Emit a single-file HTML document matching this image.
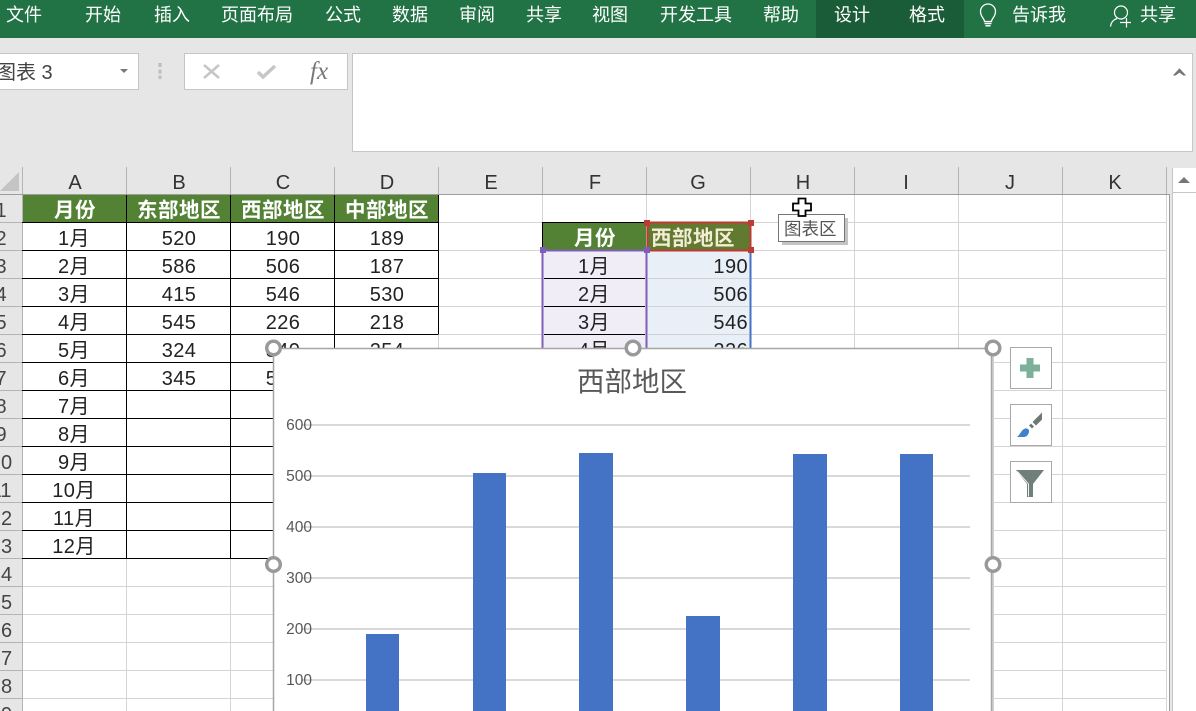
<!DOCTYPE html>
<html lang="zh"><head><meta charset="utf-8"><title>Excel</title>
<style>
html,body{margin:0;padding:0;background:#e6e6e6;width:1196px;height:711px;overflow:hidden}
svg{display:block}
text{font-family:"Liberation Sans","Noto Sans CJK SC",sans-serif}
.t{font-size:18px;fill:#fff;text-anchor:middle}
.c{font-size:20px;fill:#333;text-anchor:middle}
.r{font-size:20px;fill:#444;text-anchor:middle}
.h{font-size:20.5px;font-weight:700;fill:#fff;text-anchor:middle;letter-spacing:.5px}
.d{font-size:20px;fill:#222;text-anchor:middle;letter-spacing:.4px}
.e{font-size:20px;fill:#222;text-anchor:end;letter-spacing:.4px}
.y{font-size:15.5px;fill:#595959;text-anchor:end}
</style></head><body>
<svg xmlns="http://www.w3.org/2000/svg" width="1196" height="711" viewBox="0 0 1196 711">
<rect width="1196" height="711" fill="#e6e6e6"/>
<!-- ribbon -->
<rect width="1196" height="38" fill="#217346"/>
<rect x="816" width="148" height="38" fill="#1a5c38"/>
<g>
<text class="t" x="24" y="21">文件</text><text class="t" x="103" y="21">开始</text><text class="t" x="172" y="21">插入</text><text class="t" x="257" y="21">页面布局</text><text class="t" x="343" y="21">公式</text><text class="t" x="410" y="21">数据</text><text class="t" x="477" y="21">审阅</text><text class="t" x="544" y="21">共享</text><text class="t" x="610" y="21">视图</text><text class="t" x="696" y="21">开发工具</text><text class="t" x="781" y="21">帮助</text><text class="t" x="852" y="21">设计</text><text class="t" x="927" y="21">格式</text><text class="t" x="1039" y="21">告诉我</text><text class="t" x="1158" y="21">共享</text>
</g>
<!-- bulb -->
<path d="M984.500 21.500c0-3-4-4.500-4-10a7.500 7.500 0 0 1 15 0c0 5.500-4 7-4 10z" fill="none" stroke="#fff" stroke-width="1.300"/>
<path d="M984.500 23.500h7M985.500 25.800h5" stroke="#fff" stroke-width="1.500"/>
<!-- person -->
<circle cx="1121" cy="12.500" r="6.500" fill="none" stroke="#fff" stroke-width="1.200"/>
<path d="M1110.500 26.500c.5-4.500 3.500-7 6.500-8M1120 22.500h11M1126.500 18v9.500" fill="none" stroke="#fff" stroke-width="1.200"/>
<!-- formula bar -->
<rect x="-5" y="53.500" width="143.500" height="36" fill="#fff" stroke="#c6c6c6"/>
<text x="-4" y="79" font-size="20" fill="#444">图表 3</text>
<path d="M120 69h8l-4 4z" fill="#777"/>
<path d="M158.500 63h3v4h-3zM158.500 69.500h3v4h-3zM158.500 75.500h3v3.500h-3z" fill="#bdbdbd"/>
<rect x="184.500" y="53.500" width="163" height="36" fill="#fff" stroke="#c6c6c6"/>
<path d="M204 65l15 13M219 65l-15 13" stroke="#c6c6c6" stroke-width="2.500"/>
<path d="M258 72l5 5 12-11" fill="none" stroke="#c6c6c6" stroke-width="3.500"/>
<text x="310" y="79" font-size="25" font-style="italic" fill="#777" style="font-family:'Liberation Serif',serif">fx</text>
<rect x="352.500" y="53.500" width="840" height="98" fill="#fff" stroke="#c6c6c6"/>
<path d="M1174 75l5.500-6 5.500 6-1.500 0-4-3-4 3z" fill="#777" stroke="#777"/>
<!-- sheet -->
<path d="M0 191V191L19 172V191z" fill="#c4c4c4"/>
<rect x="23" y="195" width="1146" height="516" fill="#fff"/>
<path d="M22.500 167v27M126.500 167v27M230.500 167v27M334.500 167v27M438.500 167v27M542.500 167v27M646.500 167v27M750.500 167v27M854.500 167v27M958.500 167v27M1062.500 167v27M1166.500 167v27" stroke="#b4b4b4"/>
<path d="M0 194.500H1169" stroke="#9c9c9c"/>
<path d="M0 222.500h22M0 250.500h22M0 278.500h22M0 306.500h22M0 334.500h22M0 362.500h22M0 390.500h22M0 418.500h22M0 446.500h22M0 474.500h22M0 502.500h22M0 530.500h22M0 558.500h22M0 586.500h22M0 614.500h22M0 642.500h22M0 670.500h22M0 698.500h22M22.500 195V711" stroke="#b4b4b4"/>
<path d="M23 222.500H1166M23 250.500H1166M23 278.500H1166M23 306.500H1166M23 334.500H1166M23 362.500H1166M23 390.500H1166M23 418.500H1166M23 446.500H1166M23 474.500H1166M23 502.500H1166M23 530.500H1166M23 558.500H1166M23 586.500H1166M23 614.500H1166M23 642.500H1166M23 670.500H1166M23 698.500H1166M126.500 195V711M230.500 195V711M334.500 195V711M438.500 195V711M542.500 195V711M646.500 195V711M750.500 195V711M854.500 195V711M958.500 195V711M1062.500 195V711M1166.500 195V711" stroke="#d4d4d4"/>
<path d="M1169.500 194V711" stroke="#9c9c9c"/>
<rect x="1170" y="167" width="2" height="544" fill="#e6e6e6"/>
<rect x="1172" y="168" width="24" height="543" fill="#fff"/>
<path d="M1172.500 168V711M1172 192.500H1196" stroke="#c6c6c6"/>
<path d="M1178 183l6-6 6 6z" fill="#777"/>
<!-- column letters -->
<g>
<text class="c" x="75" y="189">A</text><text class="c" x="179" y="189">B</text><text class="c" x="283" y="189">C</text><text class="c" x="387" y="189">D</text><text class="c" x="491" y="189">E</text><text class="c" x="595" y="189">F</text><text class="c" x="698" y="189">G</text><text class="c" x="803" y="189">H</text><text class="c" x="906" y="189">I</text><text class="c" x="1010" y="189">J</text><text class="c" x="1115" y="189">K</text>
</g>
<!-- row numbers -->
<g>
<text class="r" x="1" y="217">1</text><text class="r" x="1" y="245">2</text><text class="r" x="1" y="273">3</text><text class="r" x="1" y="301">4</text><text class="r" x="1" y="329">5</text><text class="r" x="1" y="357">6</text><text class="r" x="1" y="385">7</text><text class="r" x="1" y="413">8</text><text class="r" x="1" y="441">9</text><text class="r" x="1" y="469">10</text><text class="r" x="1" y="497">11</text><text class="r" x="1" y="525">12</text><text class="r" x="1" y="553">13</text><text class="r" x="1" y="581">14</text><text class="r" x="1" y="609">15</text><text class="r" x="1" y="637">16</text><text class="r" x="1" y="665">17</text><text class="r" x="1" y="693">18</text><text class="r" x="1" y="721">19</text>
</g>
<!-- table A:D -->
<rect x="23" y="195" width="415" height="27" fill="#548235"/>
<path d="M22 222.500H438.500M22 250.500H438.500M22 278.500H438.500M22 306.500H438.500M22 334.500H438.500M22 362.500H334M22 390.500H334M22 418.500H334M22 446.500H334M22 474.500H334M22 502.500H334M22 530.500H334M22 558.500H334M126.500 195V558M230.500 195V558M334.500 195V362M438.500 195V334" stroke="#000"/>
<g>
<text class="h" x="75" y="217">月份</text><text class="h" x="179" y="217">东部地区</text><text class="h" x="283" y="217">西部地区</text><text class="h" x="387" y="217">中部地区</text>
<text class="d" x="74" y="245">1月</text><text class="d" x="74" y="273">2月</text><text class="d" x="74" y="301">3月</text><text class="d" x="74" y="329">4月</text><text class="d" x="74" y="357">5月</text><text class="d" x="74" y="385">6月</text><text class="d" x="74" y="413">7月</text><text class="d" x="74" y="441">8月</text><text class="d" x="74" y="469">9月</text><text class="d" x="74" y="497">10月</text><text class="d" x="74" y="525">11月</text><text class="d" x="74" y="553">12月</text>
<text class="d" x="179" y="245">520</text><text class="d" x="179" y="273">586</text><text class="d" x="179" y="301">415</text><text class="d" x="179" y="329">545</text><text class="d" x="179" y="357">324</text><text class="d" x="179" y="385">345</text>
<text class="d" x="283" y="245">190</text><text class="d" x="283" y="273">506</text><text class="d" x="283" y="301">546</text><text class="d" x="283" y="329">226</text><text class="d" x="283" y="357">340</text><text class="d" x="283" y="385">543</text>
<text class="d" x="387" y="245">189</text><text class="d" x="387" y="273">187</text><text class="d" x="387" y="301">530</text><text class="d" x="387" y="329">218</text><text class="d" x="387" y="357">254</text>
</g>
<!-- table F:G -->
<rect x="543" y="251" width="103" height="100" fill="#f0edf7"/>
<rect x="647" y="251" width="103" height="100" fill="#e8eff7"/>
<path d="M648 278.500H749M648 306.500H749M648 334.500H749" stroke="#cfd3d8"/>
<path d="M544 278.500H645M544 306.500H645M544 334.500H645" stroke="#000"/>
<rect x="543" y="223" width="103" height="27" fill="#548235"/>
<path d="M542.500 223V250M542 222.500H646" stroke="#000"/>
<rect x="648" y="223.500" width="102" height="26" fill="#627a2f"/>
<rect x="647.500" y="222.500" width="103" height="28" fill="none" stroke="#be3a34" stroke-width="2"/>
<path d="M544 250.500H646" stroke="#7f5fb5" stroke-width="2"/>
<path d="M542.500 250V350M646.500 250V350" stroke="#7f5fb5" stroke-width="2"/>
<path d="M750.500 252V350" stroke="#4472c4" stroke-width="2"/>
<g fill="#be3a34"><rect x="644" y="220" width="6" height="6"/><rect x="748" y="220" width="6" height="6"/><rect x="748" y="247" width="6" height="6"/></g>
<g fill="#7f5fb5"><rect x="540" y="247" width="6" height="6"/><rect x="644" y="247" width="6" height="6"/></g>
<g>
<text class="h" x="595" y="245">月份</text>
<text x="651" y="245" font-size="20.500" font-weight="700" fill="#f3ecd6" letter-spacing=".5">西部地区</text>
<text class="d" x="594" y="273">1月</text><text class="d" x="594" y="301">2月</text><text class="d" x="594" y="329">3月</text><text class="d" x="594" y="357">4月</text>
<text class="e" x="748" y="273">190</text><text class="e" x="748" y="301">506</text><text class="e" x="748" y="329">546</text><text class="e" x="748" y="357">226</text>
</g>
<!-- tooltip and cursor -->
<path d="M782 218h66v27h-66z" fill="#c4c4c4"/>
<rect x="778.500" y="214.500" width="66" height="27" fill="#fff" stroke="#767676"/>
<text x="784" y="235" font-size="17.500" fill="#555">图表区</text>
<path d="M798.500 198.500h7v5h5.500v7h-5.500v5.500h-7v-5.500h-5.500v-7h5.500z" fill="#fff" stroke="#000" stroke-width="1.800"/>
<!-- chart -->
<rect x="273" y="348" width="720" height="370" fill="#fff"/>
<path d="M992.500 348V711" stroke="#d0d0d0" stroke-width="3"/>
<path d="M273.500 348V711M273 348.500H993M991.500 348V711" stroke="#a6a6a6" stroke-width="1.500"/>
<text x="632" y="391" font-size="27.500" fill="#595959" text-anchor="middle">西部地区</text>
<path d="M301 425H970M301 476H970M301 527H970M301 578H970M301 629H970M301 680H970" stroke="#d9d9d9" stroke-width="2"/>
<text class="y" x="312" y="430">600</text><text class="y" x="312" y="481">500</text><text class="y" x="312" y="532">400</text><text class="y" x="312" y="583">300</text><text class="y" x="312" y="634">200</text><text class="y" x="312" y="685">100</text>
<g fill="#4472c4">
<rect x="366" y="634" width="33" height="80"/><rect x="473" y="473" width="33" height="240"/><rect x="579" y="453" width="34" height="260"/><rect x="686" y="616" width="34" height="100"/><rect x="793" y="454" width="34" height="260"/><rect x="900" y="454" width="33" height="260"/>
</g>
<g fill="#fff" stroke="#999" stroke-width="3.400">
<circle cx="273.500" cy="348" r="6.800"/><circle cx="633" cy="348" r="6.800"/><circle cx="993" cy="348" r="6.800"/><circle cx="273.500" cy="564.500" r="6.800"/><circle cx="993" cy="564.500" r="6.800"/>
</g>
<!-- chart buttons -->
<g fill="#fff" stroke="#a8a8a8"><rect x="1010.500" y="347.500" width="41" height="41"/><rect x="1010.500" y="404.500" width="41" height="41"/><rect x="1010.500" y="461.500" width="41" height="41"/></g>
<path d="M1026.500 358h7v6.500h6.500v7h-6.500v6.500h-7v-6.500h-6.500v-7h6.500z" fill="#7cb09a"/>
<path d="M1042 412.500v7l-6 6-3.500-3.500zM1031 423.500l3 3-2 2-3-3z" fill="#6f7775"/>
<path d="M1017 437c3-2 4-7 8-8.500 2.500-.5 4.500 1 4 3.500-.5 3-3 5-5 5z" fill="#3e82cc"/>
<path d="M1016 470h28l-11 14v13h-6v-13z" fill="#6f7f7a"/>
<path d="M1017.500 471.500l11 12.500v12.500" fill="none" stroke="#fff" stroke-width=".9"/>
</svg>
</body></html>
